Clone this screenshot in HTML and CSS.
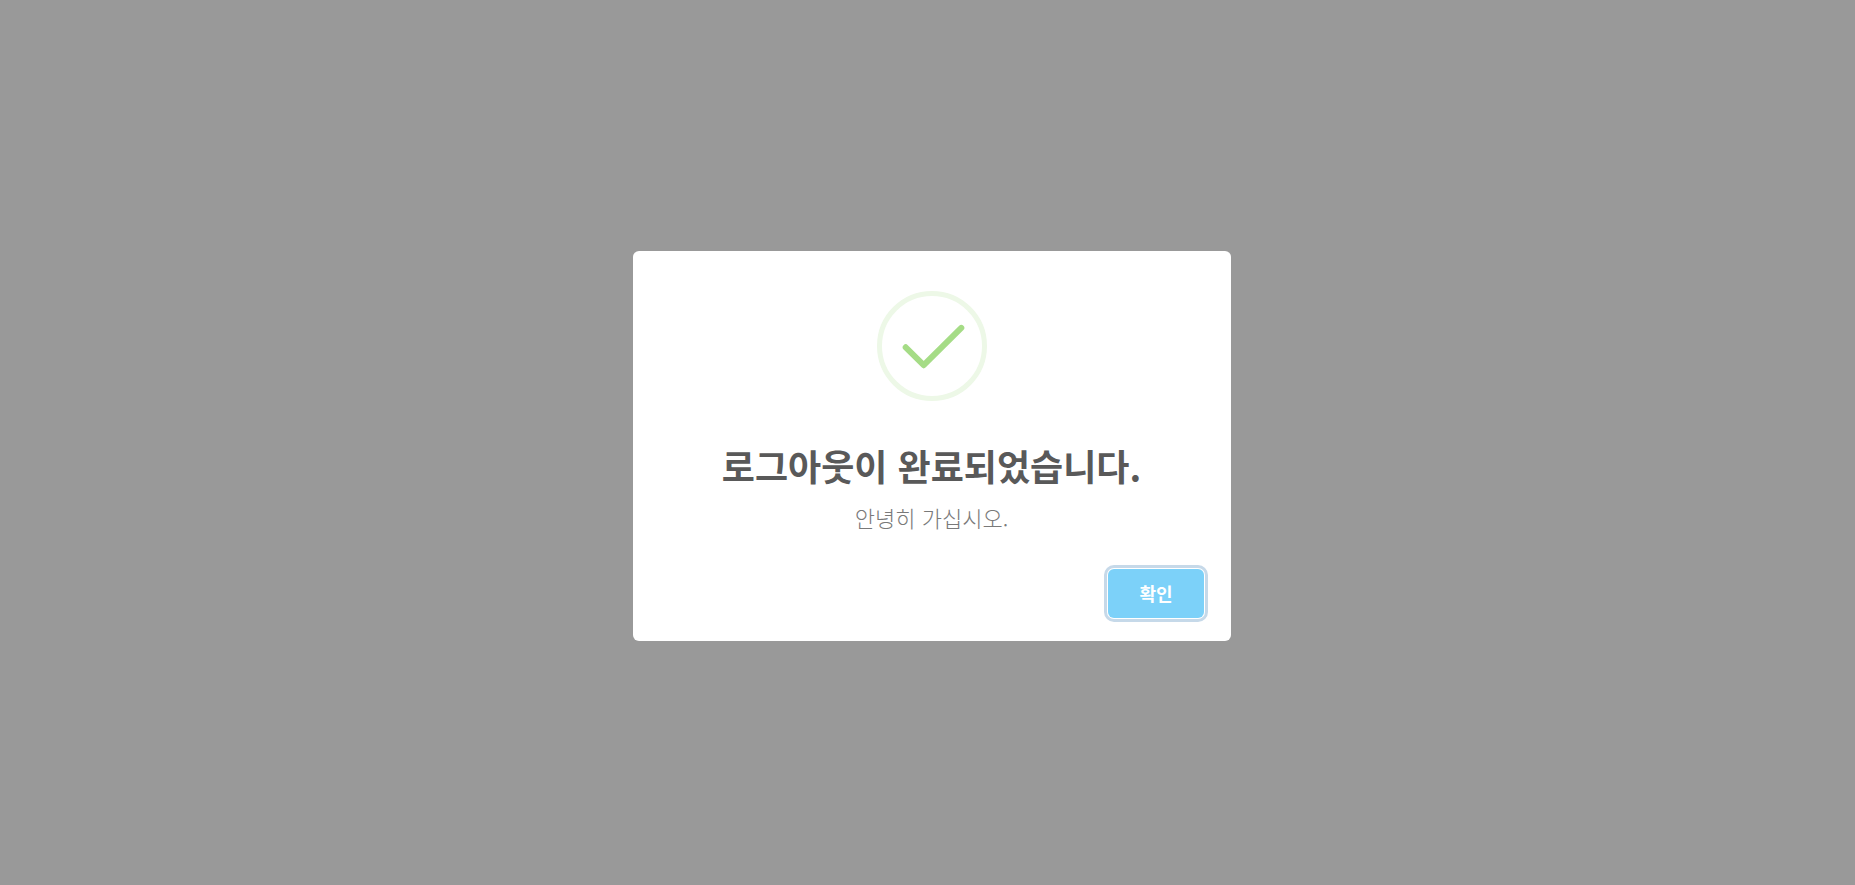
FILE: index.html
```html
<!DOCTYPE html>
<html lang="ko">
<head>
<meta charset="utf-8">
<meta name="viewport" content="width=device-width, initial-scale=1">
<title>로그아웃</title>
<link rel="stylesheet" href="styles.css">
</head>
<body>
<div class="overlay">
  <div class="modal" role="dialog" aria-modal="true" aria-labelledby="modal-title" aria-describedby="modal-text">
    <svg class="modal-icon" viewBox="0 0 110 110" aria-hidden="true">
      <circle cx="55" cy="55" r="52.5" fill="none" stroke="#edf8e7" stroke-width="5"/>
      <path d="M28.7 56.3 46.7 74.2 84.3 36.9" fill="none" stroke="#a5dc86" stroke-width="6" stroke-linecap="round" stroke-linejoin="round"/>
    </svg>
    <h1 class="modal-title" id="modal-title">로그아웃이 완료되었습니다.</h1>
    <p class="modal-text" id="modal-text">안녕히 가십시오.</p>
    <div class="modal-footer">
      <button class="button" type="button">확인</button>
    </div>
  </div>
</div>
</body>
</html>
```
FILE: styles.css
```css
* {
  box-sizing: border-box;
}

body {
  margin: 0;
  font-family: "Noto Sans CJK KR", sans-serif;
}

.overlay {
  display: flex;
  align-items: center;
  justify-content: center;
  min-height: 100vh;
  padding: 22px 16px 16px 24px;
  background: #999;
}

.modal {
  display: flex;
  flex-direction: column;
  align-items: center;
  width: 100%;
  max-width: 598px;
  padding-top: 40px;
  border-radius: 6px;
  background: #fff;
  text-align: center;
}

.modal-icon {
  width: 110px;
  height: 110px;
}

.modal-title {
  margin: 40px 20px 0;
  color: #595959;
  font-size: 36px;
  font-weight: 700;
  line-height: 48px;
}

.modal-text {
  margin: 12px 20px 0;
  color: #797979;
  font-size: 22px;
  font-weight: 300;
  line-height: 32px;
}

.modal-footer {
  display: flex;
  justify-content: flex-end;
  width: 100%;
  margin-top: 20px;
  padding: 16px 27px 23px;
}

.button {
  padding: 12px 31px;
  border: 0;
  border-radius: 6px;
  background: #7cd1f9;
  box-shadow: 0 0 0 1px #fff, 0 0 0 4px #c6d9e9;
  color: #fff;
  font-family: inherit;
  font-size: 18px;
  font-weight: 700;
  line-height: 25px;
  cursor: pointer;
}
```
